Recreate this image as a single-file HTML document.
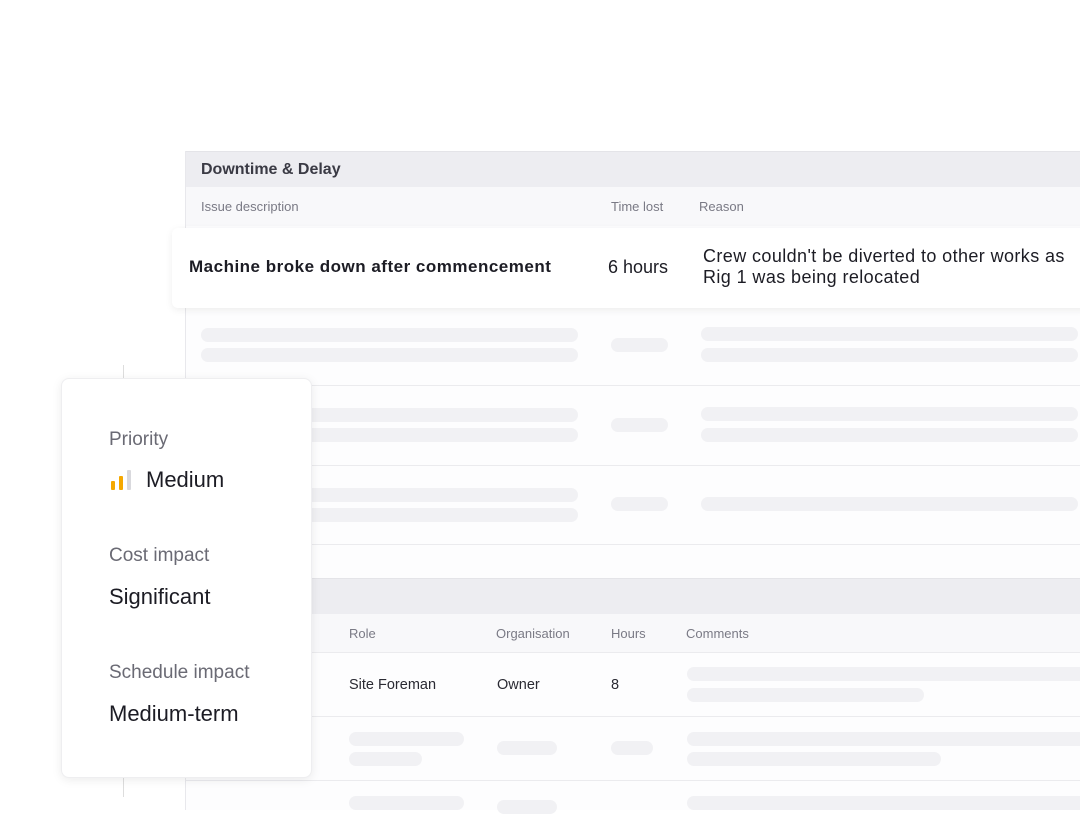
<!DOCTYPE html>
<html><head><style>
*{margin:0;padding:0;box-sizing:border-box}
body{width:1080px;height:810px;background:#fff;position:relative;overflow:hidden;font-family:"Liberation Sans",sans-serif}
.a{position:absolute}
.sk{position:absolute;background:#f1f1f4;border-radius:7px;height:14px}
.hl{position:absolute;left:186px;right:0;height:1px;background:#ebebee}
.ch{position:absolute;font-size:13px;color:#7a7a85}
</style></head><body>
<div class="a" style="left:185px;top:151px;width:895px;height:659px;background:#fdfdfe;border-left:1px solid #e8e8ec"></div>
<div class="a" style="left:186px;top:151px;right:0;height:36px;background:#ededf1;border-top:1px solid #e4e4e8"></div>
<div class="a" style="left:201px;top:161px;font-size:16px;font-weight:bold;color:#3a3a44">Downtime &amp; Delay</div>
<div class="a" style="left:186px;top:187px;right:0;height:39px;background:#f8f8fa"></div>
<div class="ch" style="left:201px;top:199px">Issue description</div>
<div class="ch" style="left:611px;top:199px">Time lost</div>
<div class="ch" style="left:699px;top:199px">Reason</div>
<div class="a" style="left:172px;top:228px;width:920px;height:80px;background:#fff;border-radius:6px;box-shadow:0 2px 8px rgba(0,0,0,0.07)"></div>
<div class="a" style="left:189px;top:257px;font-size:17px;font-weight:bold;color:#1c1c24;letter-spacing:0.5px">Machine broke down after commencement</div>
<div class="a" style="left:608px;top:257px;font-size:18px;color:#1c1c24">6 hours</div>
<div class="a" style="left:703px;top:246px;font-size:18px;line-height:21px;color:#1c1c24;letter-spacing:0.4px">Crew couldn't be diverted to other works as<br>Rig 1 was being relocated</div>

<div class="sk" style="left:201px;top:328px;width:377px"></div><div class="sk" style="left:201px;top:348px;width:377px"></div>
<div class="sk" style="left:611px;top:338px;width:57px"></div>
<div class="sk" style="left:701px;top:327px;width:377px"></div><div class="sk" style="left:701px;top:348px;width:377px"></div>
<div class="hl" style="top:385px"></div>
<div class="sk" style="left:201px;top:408px;width:377px"></div><div class="sk" style="left:201px;top:428px;width:377px"></div>
<div class="sk" style="left:611px;top:418px;width:57px"></div>
<div class="sk" style="left:701px;top:407px;width:377px"></div><div class="sk" style="left:701px;top:428px;width:377px"></div>
<div class="hl" style="top:465px"></div>
<div class="sk" style="left:201px;top:488px;width:377px"></div><div class="sk" style="left:201px;top:508px;width:377px"></div>
<div class="sk" style="left:611px;top:497px;width:57px"></div>
<div class="sk" style="left:701px;top:497px;width:377px"></div>
<div class="hl" style="top:544px"></div>

<div class="a" style="left:186px;top:578px;right:0;height:36px;background:#ededf1;border-top:1px solid #e4e4e8"></div>
<div class="a" style="left:186px;top:614px;right:0;height:38px;background:#f8f8fa"></div>
<div class="ch" style="left:349px;top:626px">Role</div>
<div class="ch" style="left:496px;top:626px">Organisation</div>
<div class="ch" style="left:611px;top:626px">Hours</div>
<div class="ch" style="left:686px;top:626px">Comments</div>
<div class="hl" style="top:652px"></div>
<div class="a" style="left:349px;top:677px;font-size:14.5px;color:#2a2a33">Site Foreman</div>
<div class="a" style="left:497px;top:677px;font-size:14.5px;color:#2a2a33">Owner</div>
<div class="a" style="left:611px;top:677px;font-size:14.5px;color:#2a2a33">8</div>
<div class="sk" style="left:687px;top:667px;width:400px"></div><div class="sk" style="left:687px;top:688px;width:237px"></div>
<div class="hl" style="top:716px"></div>
<div class="sk" style="left:349px;top:732px;width:115px"></div><div class="sk" style="left:349px;top:752px;width:73px"></div>
<div class="sk" style="left:497px;top:741px;width:60px"></div>
<div class="sk" style="left:611px;top:741px;width:42px"></div>
<div class="sk" style="left:687px;top:732px;width:400px"></div><div class="sk" style="left:687px;top:752px;width:254px"></div>
<div class="hl" style="top:780px"></div>
<div class="sk" style="left:349px;top:796px;width:115px"></div>
<div class="sk" style="left:497px;top:800px;width:60px"></div>
<div class="sk" style="left:687px;top:796px;width:400px"></div>

<div class="a" style="left:123px;top:365px;width:1px;height:14px;background:#ddd"></div>
<div class="a" style="left:123px;top:777px;width:1px;height:20px;background:#ddd"></div>
<div class="a" style="left:61px;top:378px;width:251px;height:400px;background:#fff;border-radius:8px;box-shadow:0 2px 10px rgba(0,0,0,0.08);border:1px solid #eeeef0"></div>
<div class="a" style="left:109px;top:429px;font-size:19px;color:#6a6a74">Priority</div>
<svg class="a" style="left:111px;top:470px" width="22" height="20"><rect x="0" y="11" width="4" height="9" rx="1" fill="#f5a800"/><rect x="8" y="6" width="4" height="14" rx="1" fill="#f5a800"/><rect x="16" y="0" width="4" height="20" rx="1" fill="#d9d9dd"/></svg>
<div class="a" style="left:146px;top:467px;font-size:22px;color:#1c1c24">Medium</div>
<div class="a" style="left:109px;top:545px;font-size:19px;color:#6a6a74">Cost impact</div>
<div class="a" style="left:109px;top:584px;font-size:22px;color:#1c1c24">Significant</div>
<div class="a" style="left:109px;top:662px;font-size:19px;color:#6a6a74">Schedule impact</div>
<div class="a" style="left:109px;top:701px;font-size:22px;color:#1c1c24">Medium-term</div>
</body></html>
